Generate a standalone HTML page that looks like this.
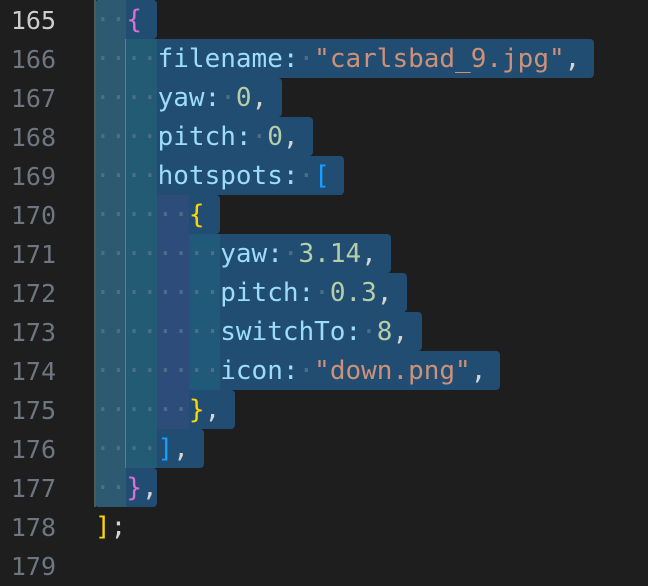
<!DOCTYPE html>
<html><head><meta charset="utf-8"><style>
html,body{margin:0;padding:0;background:#1e1e1e;width:648px;height:556px;overflow:hidden}
.ln{position:absolute;left:0;width:56px;text-align:right;font:25px/39px "DejaVu Sans Mono",monospace;color:#6e7681}
.ln.cur{color:#cccccc}
.sel{position:absolute;left:95px;height:39px;background:#214d72;border-radius:4px}
.blk{position:absolute}
.code{position:absolute;left:95px;font:26px/39px "DejaVu Sans Mono",monospace;white-space:pre;color:#d4d4d4}
.d{color:#4c6f88}
.p{color:#9cdcfe}.s{color:#ce9178}.n{color:#b5cea8}
.pk{color:#da70d6}.y{color:#ffd700}.b{color:#179fff}
</style></head><body>
<div class="ln cur" style="top:1px">165</div>
<div class="ln" style="top:40px">166</div>
<div class="ln" style="top:79px">167</div>
<div class="ln" style="top:118px">168</div>
<div class="ln" style="top:157px">169</div>
<div class="ln" style="top:196px">170</div>
<div class="ln" style="top:235px">171</div>
<div class="ln" style="top:274px">172</div>
<div class="ln" style="top:313px">173</div>
<div class="ln" style="top:352px">174</div>
<div class="ln" style="top:391px">175</div>
<div class="ln" style="top:430px">176</div>
<div class="ln" style="top:469px">177</div>
<div class="ln" style="top:508px">178</div>
<div class="ln" style="top:547px">179</div>

<div class="sel" style="top:0;width:62px"></div>
<div class="sel" style="top:39px;width:499px"></div>
<div class="sel" style="top:78px;width:187px"></div>
<div class="sel" style="top:117px;width:218px"></div>
<div class="sel" style="top:156px;width:249px"></div>
<div class="sel" style="top:195px;width:125px"></div>
<div class="sel" style="top:234px;width:296px"></div>
<div class="sel" style="top:273px;width:312px"></div>
<div class="sel" style="top:312px;width:327px"></div>
<div class="sel" style="top:351px;width:405px"></div>
<div class="sel" style="top:390px;width:140px"></div>
<div class="sel" style="top:429px;width:109px"></div>
<div class="sel" style="top:468px;width:62px"></div>

<div class="blk" style="left:95px;top:0;width:31px;height:507px;background:#2d5a71;border-radius:4px 0 0 4px"></div>
<div class="blk" style="left:94px;top:0;width:2px;height:507px;background:#4f5a55"></div>
<div class="blk" style="left:126px;top:39px;width:31px;height:429px;background:#235b75"></div>
<div class="blk" style="left:125px;top:39px;width:1px;height:429px;background:#6a7a72"></div>
<div class="blk" style="left:157px;top:195px;width:32px;height:234px;background:#2d4c79"></div>
<div class="blk" style="left:189px;top:234px;width:31px;height:156px;background:#21597b"></div>

<div class="code" style="top:1px"><span class="d">··</span><span class="pk">{</span>
<span class="d">····</span><span class="p">filename:</span><span class="d">·</span><span class="s">"carlsbad_9.jpg"</span>,
<span class="d">····</span><span class="p">yaw:</span><span class="d">·</span><span class="n">0</span>,
<span class="d">····</span><span class="p">pitch:</span><span class="d">·</span><span class="n">0</span>,
<span class="d">····</span><span class="p">hotspots:</span><span class="d">·</span><span class="b">[</span>
<span class="d">······</span><span class="y">{</span>
<span class="d">········</span><span class="p">yaw:</span><span class="d">·</span><span class="n">3.14</span>,
<span class="d">········</span><span class="p">pitch:</span><span class="d">·</span><span class="n">0.3</span>,
<span class="d">········</span><span class="p">switchTo:</span><span class="d">·</span><span class="n">8</span>,
<span class="d">········</span><span class="p">icon:</span><span class="d">·</span><span class="s">"down.png"</span>,
<span class="d">······</span><span class="y">}</span>,
<span class="d">····</span><span class="b">]</span>,
<span class="d">··</span><span class="pk">}</span>,
<span class="y">]</span>;</div>
</body></html>
